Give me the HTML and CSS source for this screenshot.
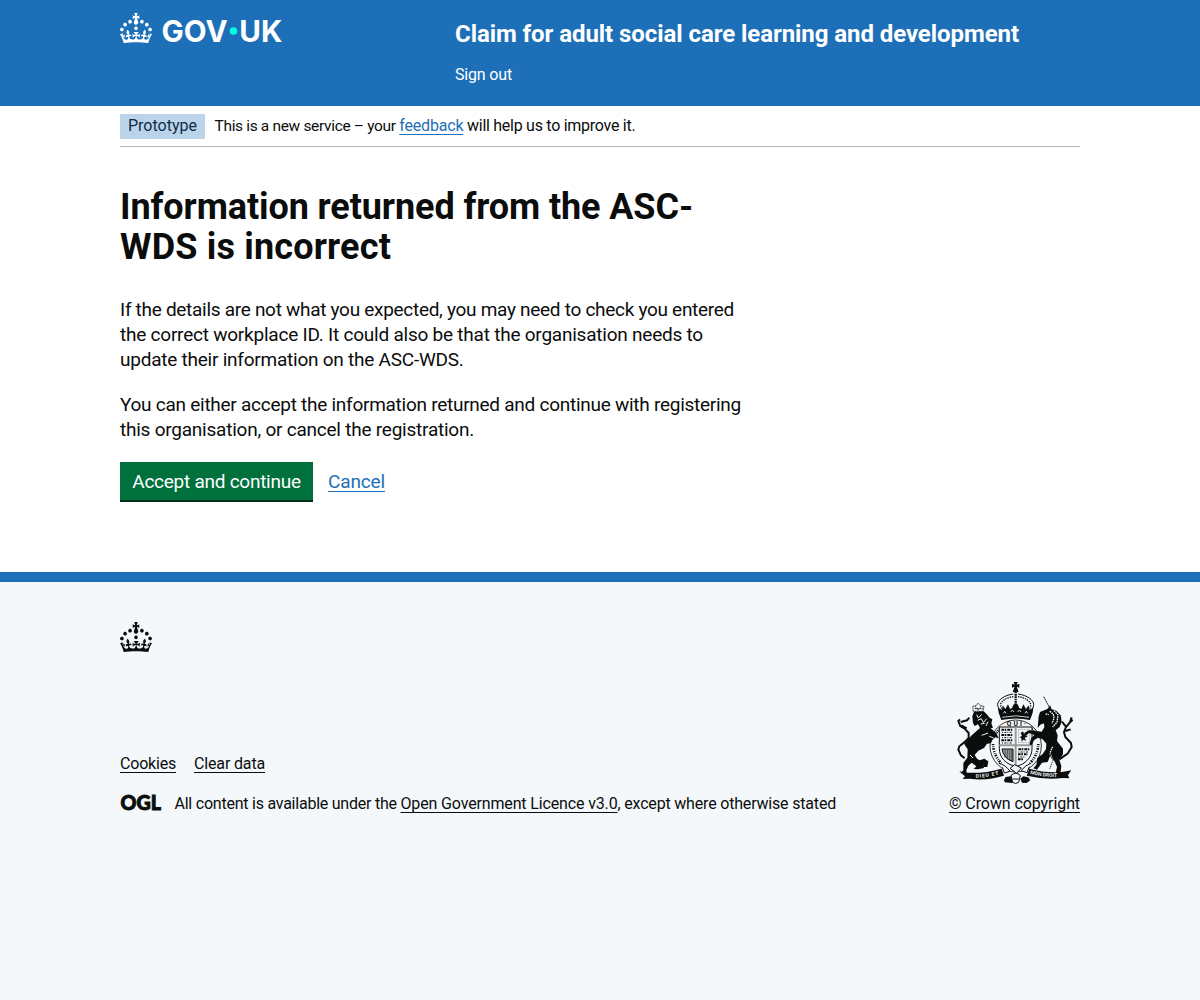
FILE: index.html
```html
<!DOCTYPE html>
<html lang="en">
<head>
<meta charset="utf-8">
<title>Information returned from the ASC-WDS is incorrect</title>
<link rel="stylesheet" href="styles.css">
</head>
<body>
<svg class="defs" aria-hidden="true">
  <symbol id="crown" viewBox="0 0 32 30">
    <path d="M22.6 10.4c-1 .4-2-.1-2.4-1-.4-.9.1-2 1-2.4.9-.4 2 .1 2.4 1s-.1 2-1 2.4m-5.9 6.7c-.9.4-2-.1-2.4-1-.4-.9.1-2 1-2.4.9-.4 2 .1 2.4 1s-.1 2-1 2.4m10.8-3.7c-1 .4-2-.1-2.4-1-.4-.9.1-2 1-2.4.9-.4 2 .1 2.4 1s0 2-1 2.4m3.3 4.8c-1 .4-2-.1-2.4-1-.4-.9.1-2 1-2.4.9-.4 2 .1 2.4 1s-.1 2-1 2.4M17 4.7l2.3 1.2V2.5l-2.3.7-.2-.2.9-3h-3.4l.9 3-.2.2c-.1.1-2.3-.7-2.3-.7v3.4L15 4.7c.1.1.1.2.2.2l-1.3 4c-.1.2-.1.4-.1.6 0 1.1.8 2 1.9 2.2h.7c1-.2 1.9-1.1 1.9-2.1 0-.2 0-.4-.1-.6l-1.3-4c-.1-.2 0-.2.1-.3m-7.6 5.7c.9.4 2-.1 2.4-1 .4-.9-.1-2-1-2.4-.9-.4-2 .1-2.4 1s0 2 1 2.4m-5 3c.9.4 2-.1 2.4-1 .4-.9-.1-2-1-2.4-.9-.4-2 .1-2.4 1s.1 2 1 2.4m-3.2 4.8c.9.4 2-.1 2.4-1 .4-.9-.1-2-1-2.4-.9-.4-2 .1-2.4 1s0 2 1 2.4m14.8 11c4.4 0 8.6.3 12.3.8 1.1-4.5 2.4-7 3.7-8.8l-2.5-.9c.2 1.3.3 1.9 0 2.7-.4-.4-.8-1.1-1.1-2.3l-1.2 4c.7-.5 1.3-.8 2-.9-1.1 2.5-2.6 3.1-3.5 3-1.1-.2-1.7-1.2-1.5-2.1.3-1.2 1.5-1.5 2.1-.1 1.1-2.3-.8-3-2-2.3 1.9-1.9 2.1-3.5.6-5.6-2.1 1.6-2.1 3.2-1.2 5.5-1.2-1.4-3.2-.6-2.5 1.6.9-1.4 2.1-.5 1.9.8-.2 1.1-1.7 2.1-3.5 1.9-2.7-.2-2.9-2.1-2.9-3.6.7-.1 1.9.5 2.9 1.9l.4-4.3c-1.1 1.1-2.1 1.4-3.2 1.4.4-1.2 2.1-3 2.1-3h-5.4s1.7 1.9 2.1 3c-1.1 0-2.1-.2-3.2-1.4l.4 4.3c1-1.4 2.2-2 2.9-1.9-.1 1.5-.2 3.4-2.9 3.6-1.9.2-3.4-.8-3.5-1.9-.2-1.3 1-2.2 1.9-.8.7-2.3-1.2-3-2.5-1.6.9-2.2.9-3.9-1.2-5.5-1.5 2-1.3 3.7.6 5.6-1.2-.7-3.1 0-2 2.3.6-1.4 1.8-1.1 2.1.1.2.9-.3 1.9-1.5 2.1-.9.2-2.4-.5-3.5-3 .6 0 1.2.3 2 .9l-1.2-4c-.3 1.1-.7 1.9-1.1 2.3-.3-.8-.2-1.4 0-2.7l-2.9.9C1.3 23 2.6 25.5 3.7 30c3.7-.5 7.9-.8 12.3-.8"/>
  </symbol>
</svg>

<header class="header">
  <div class="container header-row">
    <a class="logo" aria-label="GOV.UK">
      <svg width="163" height="30" viewBox="0 0 163 30" overflow="visible" fill="#fff">
        <use href="#crown" width="32" height="30"/>
        <text class="logo-text" x="41.5" y="29" textLength="66" lengthAdjust="spacingAndGlyphs">GOV</text>
        <circle cx="113.5" cy="18" r="3.8" fill="#00ffe0"/>
        <text class="logo-text" x="119.3" y="29" textLength="43" lengthAdjust="spacingAndGlyphs">UK</text>
      </svg>
    </a>
    <div class="header-content">
      <a class="service">Claim for adult social care learning and development</a>
      <nav><a class="sign-out">Sign out</a></nav>
    </div>
  </div>
</header>

<div class="container">
  <div class="phase">
    <strong class="tag">Prototype</strong>
    <span class="phase-text"><span class="ph-a">This is a new service – your </span><a class="link ph-b">feedback</a><span class="ph-c"> will help us to improve it.</span></span>
  </div>
  <main class="main">
    <h1><span class="h-a">Information returned from the ASC-</span><br><span class="h-b">WDS is incorrect</span></h1>
    <p><span class="p-a">If the details are not what you expected, you may need to check you entered</span><br><span class="p-b">the correct workplace ID. It could also be that the organisation needs to</span><br><span class="p-c">update their information on the ASC-WDS.</span></p>
    <p><span class="p-d">You can either accept the information returned and continue with registering</span><br><span class="p-e">this organisation, or cancel the registration.</span></p>
    <div class="actions">
      <button class="button" type="button">Accept and continue</button>
      <a class="link cancel">Cancel</a>
    </div>
  </main>
</div>

<footer class="footer">
  <div class="container">
    <svg class="footer-crown" width="32" height="30" fill="#0b0c0c"><use href="#crown" width="32" height="30"/></svg>
    <div class="footer-row">
      <div>
        <div class="footer-links"><a class="flink f-a">Cookies</a><a class="flink f-b">Clear data</a></div>
        <div class="licence">
          <svg width="41" height="17" viewBox="0 0 41 17" overflow="visible"><text class="ogl" x=".6" y="15.8" textLength="40.5" lengthAdjust="spacingAndGlyphs">OGL</text></svg>
          <span class="licence-text"><span class="l-a">All content is available under the </span><a class="flink l-b">Open Government Licence v3.0</a><span class="l-c">, except where otherwise stated</span></span>
        </div>
      </div>
      <div class="crest">
        <svg class="arms" width="116" height="102" viewBox="36 21 348 306" fill="none" stroke="#0b0c0c">
          <!-- crown: orb, arches, rim -->
          <path d="M206 21h12l-3 8 8-3v12l-8-3 3 8 3 8h-18l3-8 3-8-8 3V26l8 3z" fill="#0b0c0c" stroke="none"/>
          <path d="M212 50v50" stroke-width="7" stroke-dasharray="5 2"/>
          <path d="M205 57C178 60 158 76 158 88c0 10 5 16 11 24M219 57c27 3 47 19 47 31 0 10-5 16-11 24" stroke-width="3"/>
          <path d="M205 65C183 67 167 80 167 89c0 8 3 13 9 20M219 65c22 2 38 15 38 24 0 8-3 13-9 20" stroke-width="4" stroke-dasharray="4 3"/>
          <path d="M161 113l-2-15 12 7 2-14 8 11 8-14 6 14 6-3 5-11h12l5 11 6 3 6-14 8 14 8-11 2 14 12-7-2 15-8 22q-43-9-86 0z" fill="#0b0c0c" stroke="none"/>
          <path d="M172 127q40-9 80 0M175 115l4-6 4 6M197 111l5-6 5 6M218 111l5-6 5 6M240 115l4-6 4 6" stroke="#f4f8fb" stroke-width="2.5"/>
          <!-- garter and shield -->
          <ellipse cx="212" cy="213" rx="77" ry="78" stroke-width="2.5" fill="#f4f8fb"/>
          <path d="M144 207q2 35 25 58M280 207q-2 35-26 58" stroke-width="8" stroke-dasharray="3 4 2 3 5 4"/>
          <path d="M151 178l13-16M260 162l14 16" stroke-width="8" stroke-dasharray="3 3"/>
          <path d="M163 156h98v64c0 29-20 47-49 55-29-8-49-26-49-55z" stroke-width="3" fill="#f4f8fb"/>
          <path d="M212 156v118M163 211h98" stroke="#999" stroke-width="6"/>
          <path d="M169 164h35M169 180h35M169 196h35M220 223h33M219 238h29M219 253h17" stroke-width="6" stroke-dasharray="8 2 5 3"/>
          <path d="M171 172h30M171 188h30M171 204h30M220 231h31M219 246h22" stroke-width="3" stroke-dasharray="3 4 6 3"/>
          <path d="M221 163h33v40h-33z" stroke-width="2" stroke="#777" stroke-dasharray="3 2"/>
          <path d="M227 174l7-5 3 7 9-4-5 9 8 2-10 6 5 8-9-3-5 6-1-10-5-4 7-3z" fill="#0b0c0c" stroke="none"/>
          <path d="M171 222h33v38q-29-10-33-38z" fill="#999" stroke-width="3"/>
          <path d="M180 227v22M187 225v29M194 225v32M200 225v35" stroke-width="1.5"/>
          <text class="garter-text" x="185" y="153" textLength="58">QUI·</text>
          <!-- lion -->
          <path d="M85 109l-2-15 11-2 5-8 7 8 11 2-3 15zM89 101h25M91 94l8 12 10-12" stroke-width="2.5" stroke-dasharray="4 1.5"/>
          <path d="M82 124l5-14 29-1 8 7 10 12 8 5-3 12 5 13-7 2 17 14 7 16-10-3-9 8-4 10-12 1-9 13-17 8-11 13 11 17 15 11 2 11-18 4-13-1 8-8-14-11-10 9-6 14 2 12-19-3 8-9 0-22 12-16 1-25-11-17 24-26 24-21-6-11-10 5-5-9z" fill="#0b0c0c" stroke="none"/>
          <path d="M95 119l5 10 10-11M98 136l11-5 6 12 10-12M107 147l12-2M129 140l-6 13M75 240l9 9M110 181l19-7M133 184l13 5" stroke="#f4f8fb" stroke-width="3"/>
          <path d="M88 247l16 9 14-5 12 8-3 17h-10l-8-10-14-4z" fill="#0b0c0c" stroke="none"/>
          <path d="M59 250l-11-9-8-17 3-10 15-12 13-13 0-15-12-13-13-8-6-15 5-5M47 141l19-5 7-8M49 151l16 9" stroke-width="6"/>
          <!-- unicorn -->
          <path d="M296 65l21 39" stroke-width="3" stroke-dasharray="5 1.5"/>
          <path d="M281 124l4-13 22-9 9-11 3 11 15 5 13 14 3 19-6 16-12 10 6 15-2 17 18 23 0 17-11 16 6 19-3 23 5 6-16 3-3-10 4-20-8-17-13-14-7 17-17 2-15 21-11-4 9-11 3-20 16-12 10-15 1-16-11-13-14-5-12 8-7 15-7-3 6-19 9-9-16-6-9 8-5-8 13-8 24 2 15 2 8-13-1-12-11 4-8 10z" fill="#0b0c0c" stroke="none"/>
          <path d="M314 109l11 8 2 13-6 15M327 107l12 13-3 22-13 14M302 117l9 2M323 215l-8 19 7 20-8 20 3 13" stroke="#f4f8fb" stroke-width="4" stroke-dasharray="5 2"/>
          <path d="M324 222l-8 18 8 16-10 26" stroke-width="2.5" stroke-dasharray="5 2"/>
          <path d="M343 253l25-17 12-20-2-12-17-18-4-15 6-15 12-14 5-15M362 154l-11-14M371 146l12-12M361 168l16-5" stroke-width="6"/>
          <!-- motto ribbon -->
          <path d="M43 289l22 4q52 3 105-12l7 21q-52 16-102 9l-22 1 7-8z" fill="#0b0c0c" stroke="none"/>
          <path d="M253 281q54 15 103 9l23-4-10 14 4 10-20-1q-50 6-108-7z" fill="#0b0c0c" stroke="none"/>
          <path id="motto-left" d="M92 308q36 0 72-10" stroke="none"/>
          <path id="motto-right" d="M255 296q38 11 84 10" stroke="none"/>
          <text class="motto"><textPath href="#motto-left" textLength="70">DIEU ET</textPath></text>
          <text class="motto"><textPath href="#motto-right" textLength="82">MON DROIT</textPath></text>
          <path d="M162 265q20 5 33 24l-17 5-6-17M259 264q-17 6-31 23l18 6 7-18M195 280l14-11 20 10-14 16z" stroke-width="3" fill="#f4f8fb"/>
          <path d="M177 315l5-9 15-2 10 7-5 13-23-2zM226 311l9-7 15 3 6 9-11 8-14-1z" fill="#0b0c0c" stroke="none"/>
          <path d="M198 301q14-12 28 0l-5 21q-9 7-18 0zM203 312h18" stroke-width="3" fill="#f4f8fb"/>
        </svg>
        <a class="flink copy">© Crown copyright</a>
      </div>
    </div>
  </div>
</footer>
</body>
</html>
```
FILE: styles.css
```css
html { background: #f4f8fb; }
body { margin: 0; background: #fff; color: #0b0c0c; font: 400 16px/20px Roboto, "Liberation Sans", sans-serif; }
.defs { display: none; }
.container { width: 960px; margin: 0 auto; }

/* Header */
.header { height: 106px; background: #1d70b8; color: #fff; }
.header-row { display: flex; }
.logo { width: 335px; padding-top: 13px; line-height: 0; }
.logo-text { font: 650 30px Inter, sans-serif; }
.header-content { padding-top: 19px; }
.service { display: block; font-size: 24px; line-height: 30px; font-weight: 700; letter-spacing: -.068px; white-space: nowrap; }
.header-content nav { margin-top: 16px; }
.sign-out { letter-spacing: -.17px; }

/* Phase banner */
.phase { display: flex; gap: 9.5px; height: 32px; padding-top: 8px; border-bottom: 1px solid #b1b4b6; }
.tag { box-sizing: border-box; width: 85px; height: 25px; padding: 2px 8px; background: #bbd4ea; color: #0c2d4a; font-weight: 400; }
.phase-text { padding-top: 2px; white-space: pre; }
.ph-a { font-size: 15.5px; letter-spacing: -.33px; }
.ph-b { letter-spacing: -.19px; }
.ph-c { letter-spacing: -.27px; }

/* Content */
.main { padding: 40px 0 70px; }
h1 { margin: 0 0 30px; font-size: 36px; line-height: 40px; font-weight: 700; }
p { margin: 0 0 20px; font-size: 19px; line-height: 25px; white-space: nowrap; }
.h-a { letter-spacing: -.093px; }
.h-b { letter-spacing: .177px; }
.p-a { letter-spacing: -.292px; }
.p-b { letter-spacing: -.225px; }
.p-c { letter-spacing: -.235px; }
.p-d { letter-spacing: -.263px; }
.p-e { letter-spacing: -.23px; }
.link { color: #1d70b8; text-decoration: underline; text-decoration-thickness: 1px; text-underline-offset: 3px; }
.actions { display: flex; gap: 15px; font-size: 19px; }
.button { width: 193px; height: 38px; margin-bottom: 2px; padding: 0; border: 0; background: #00703c; box-shadow: 0 2px 0 #002d18; color: #fff; font: 400 19px/19px Roboto, sans-serif; letter-spacing: -.26px; }
.cancel { padding-top: 10px; letter-spacing: -.139px; }

/* Footer */
.footer { border-top: 10px solid #1d70b8; padding-top: 40px; min-height: 378px; background: #f4f8fb; }
.footer-crown { display: block; margin-bottom: 30px; }
.footer-row { display: flex; justify-content: space-between; align-items: flex-end; }
.flink { text-decoration: underline; text-decoration-thickness: 1px; text-underline-offset: 3px; }
.footer-links { display: flex; gap: 18px; margin-bottom: 20px; }
.licence { display: flex; gap: 13.5px; }
.licence-text { white-space: pre; }
.ogl { font: 900 20.5px Lato, sans-serif; fill: #0b0c0c; stroke: #0b0c0c; stroke-width: .9px; }
.f-a { letter-spacing: -.2px; }
.f-b { letter-spacing: -.155px; }
.l-a { letter-spacing: -.234px; }
.l-b { letter-spacing: -.147px; }
.l-c { letter-spacing: -.185px; }
.crest { display: flex; flex-direction: column; gap: 10px; width: 131px; }
.arms { margin-left: 8px; }
.garter-text { font: 700 20px Roboto, sans-serif; fill: #0b0c0c; stroke: none; }
.motto { font: 700 15px Roboto, sans-serif; fill: #f4f8fb; stroke: none; }
.copy { letter-spacing: -.087px; white-space: nowrap; }
```
